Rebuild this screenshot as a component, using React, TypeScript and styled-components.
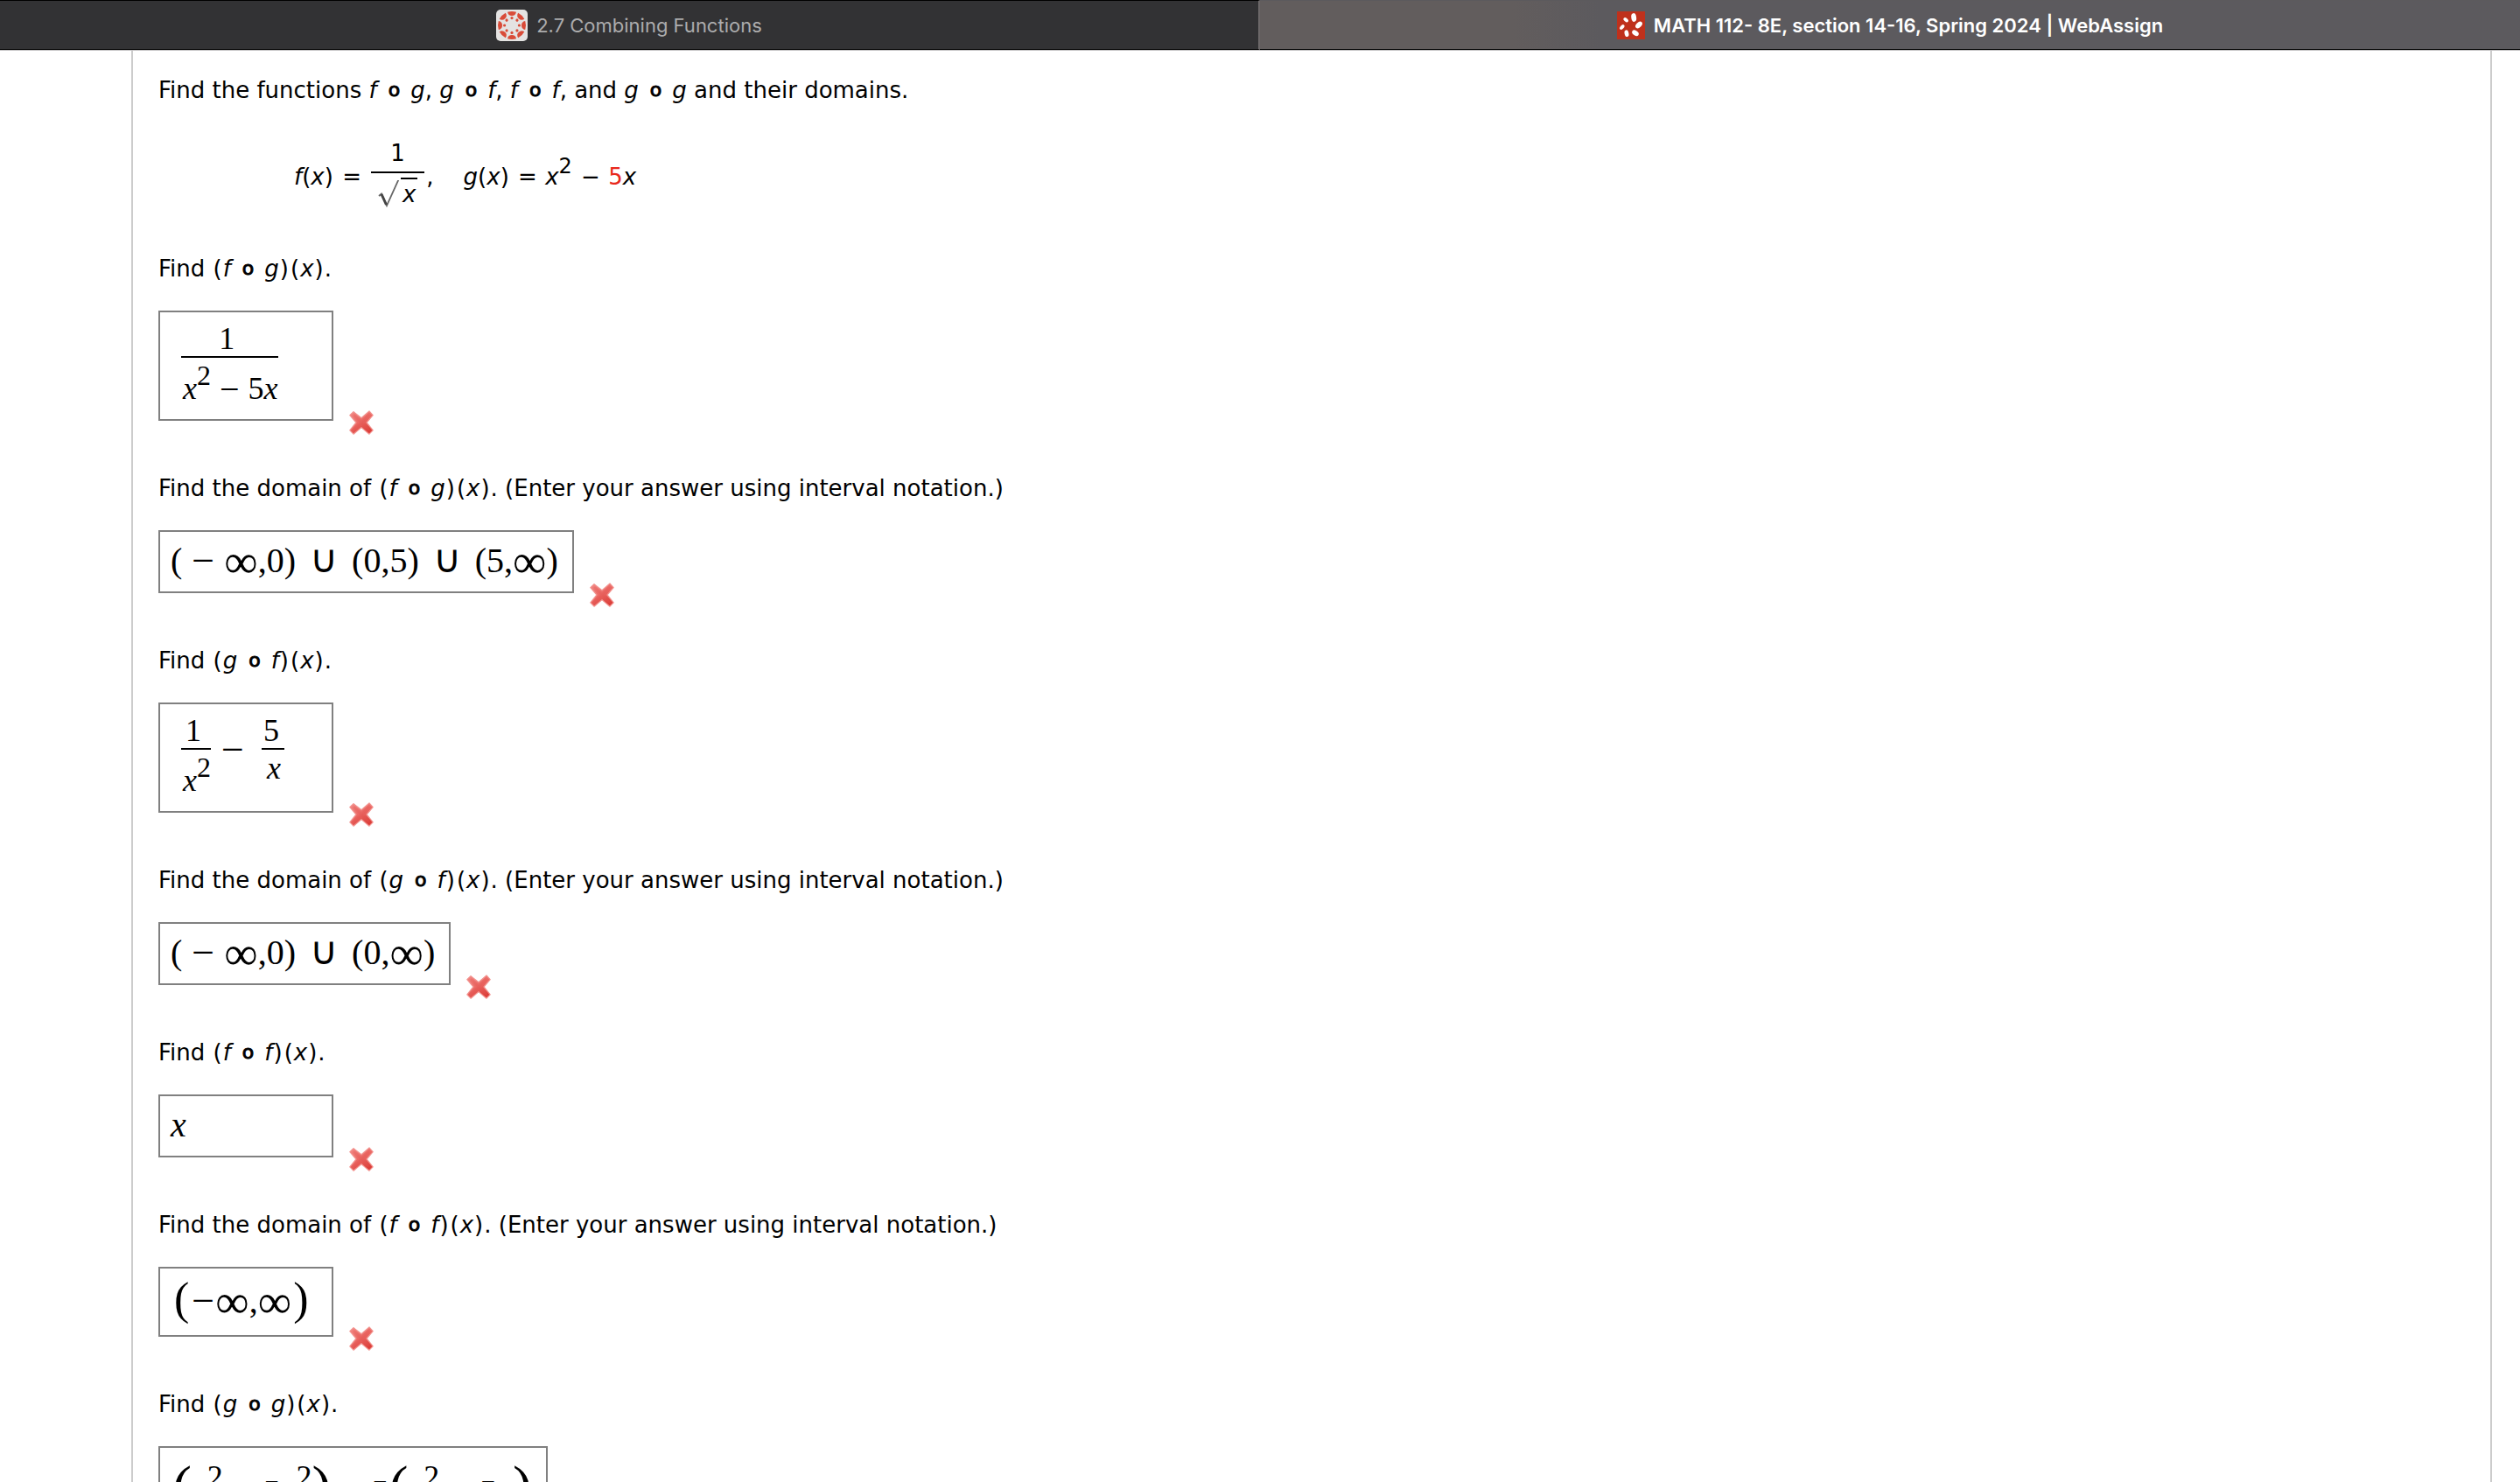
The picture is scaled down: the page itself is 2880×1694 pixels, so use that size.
import React from "react";
import styled, { createGlobalStyle } from "styled-components";

const GlobalStyle = createGlobalStyle`
  * { box-sizing: border-box; }
  body { margin: 0; background: #fff; }
`;

const sans = `"DejaVu Sans", Verdana, sans-serif`;
const serif = `"Liberation Serif", "Times New Roman", serif`;

const Shell = styled.div`
  height: 100vh;
  overflow: hidden;
  display: flex;
  flex-direction: column;
  color: #000;
  font: 26px/32px ${sans};
`;

const TabBar = styled.nav`
  display: grid;
  grid-template-columns: 1fr 1fr;
  flex: none;
  height: 58px;
  border-bottom: 1px solid #c4c2c4;
`;

const Tab = styled.button<{ $active?: boolean }>`
  display: flex;
  align-items: center;
  justify-content: center;
  gap: 10px;
  border: 0;
  border-top: 1px solid ${(p) => (p.$active ? "#5c5a5d" : "#000")};
  border-bottom: 1px solid #000;
  border-right: ${(p) => (p.$active ? "0" : "2px solid #6b6768")};
  padding: 0;
  background: ${(p) =>
    p.$active ? "linear-gradient(90deg, #625d5d 0%, #625d5d 20%, #5c5a5e 27%, #5c5a5e 100%)" : "#323234"};
  color: ${(p) => (p.$active ? "#fff" : "#acacad")};
  font: ${(p) => (p.$active ? 600 : 400)} 22px/28px Inter, sans-serif;
`;

const Question = styled.main`
  flex: 1;
  margin: 0 32px 0 150px;
  padding: 29px;
  border: solid #ccc;
  border-width: 0 2px;
`;

const Prompt = styled.p`
  margin: 0;
`;

const Circle = styled.span`
  margin: 0 12px 0 13px;
  font-size: 22px;
  line-height: 22px;
  vertical-align: 2px;
  -webkit-text-stroke: 1px #000;
`;

const Paren = styled.span`
  margin: 0 1px;
`;

const Equation = styled.div`
  display: flex;
  align-items: center;
  margin: 40px 0 46px;
  padding-left: 155px;
`;

const Ratio = styled.span`
  display: flex;
  flex-direction: column;
  align-items: center;
  margin: 0 2px 0 10px;
  padding-bottom: 7px;
`;

const RatioTop = styled.span`
  align-self: stretch;
  text-align: center;
  padding-bottom: 5px;
  border-bottom: 2px solid #000;
`;

const RatioBottom = styled.span`
  display: flex;
  padding: 8px 8px 0;
`;

const Radicand = styled.span`
  margin-top: -3px;
  padding: 1px 2px 0;
  border-top: 2px solid #000;
`;

const Power = styled.sup`
  font-size: 24px;
  line-height: 0;
  vertical-align: 13px;
`;

const Red = styled.span`
  color: #e8281c;
`;

const Second = styled.span`
  margin-left: 34px;
`;

const Relation = styled.span`
  margin: 0 1px 0 2px;
`;

const AnswerRow = styled.div`
  display: flex;
  align-items: flex-end;
  gap: 18px;
  margin: 32px 0 45px;
`;

const AnswerBox = styled.output`
  display: flex;
  align-items: flex-start;
  min-width: 200px;
  margin-bottom: 16px;
  padding: 9px 16px 11px 12px;
  border: 2px solid #808080;
  font: 40px/48px ${serif};
  white-space: pre;
`;

const TallBox = styled(AnswerBox)`
  padding: 13px 16px 15px 14px;
`;

const PowerBox = styled(AnswerBox)`
  padding: 27px 16px 24px 14px;
`;

const FractionBox = styled(AnswerBox)`
  padding: 10px 24px 15px;
`;

const Fraction = styled.span`
  display: flex;
  flex-direction: column;
  align-items: center;
  font-size: 36px;
  line-height: 40px;
`;

const Numerator = styled.span<{ $wide?: boolean }>`
  align-self: stretch;
  padding: ${(p) => (p.$wide ? "0 6px 0 2px" : "0 6px 0 0")};
  text-align: center;
  border-bottom: 2px solid #000;
`;

const Denominator = styled.span<{ $low?: boolean }>`
  margin-left: 2px;
  padding-top: ${(p) => (p.$low ? 15 : 1)}px;
`;

const Exponent = styled.sup`
  font-size: 32px;
  line-height: 0;
  vertical-align: 16px;
`;

const BigExponent = styled(Exponent)`
  font-size: 36px;
  vertical-align: 19px;
`;

const Op = styled.span<{ $gap?: number }>`
  margin: 0 ${(p) => p.$gap ?? 0}px;
  font-size: 46px;
  line-height: 0;
  vertical-align: -2px;
`;

const SmallOp = styled(Op)`
  font-size: 40px;
`;

const FractionMinus = styled(Op)`
  margin: 0 20px 0 12px;
  line-height: 48px;
  padding-top: 18px;
`;

const Infinity = styled.span`
  font-size: 54px;
  line-height: 0;
  vertical-align: -6px;
`;

const Cup = styled.span`
  margin: 0 16px;
  font-family: "DejaVu Sans Light", "DejaVu Sans", sans-serif;
  font-size: 44px;
  font-weight: 200;
  line-height: 0;
`;

const Fence = styled.span<{ $size: number }>`
  margin: 0 2px;
  font-size: ${(p) => p.$size}px;
  line-height: 0;
  vertical-align: -2px;
`;

const TallFence = styled(Fence)`
  margin: 0;
`;

const Inf = () => <Infinity>∞</Infinity>;
const Union = () => <Cup>∪</Cup>;

const WrongIcon = () => (
  <svg width="28" height="28" viewBox="0 0 28 28" role="img" aria-label="Incorrect">
    <defs>
      <linearGradient id="wrong" x1="0" y1="0" x2="0.6" y2="1">
        <stop offset="0" stopColor="#f28c88" />
        <stop offset="0.55" stopColor="#ea6763" />
        <stop offset="1" stopColor="#dc3f3a" />
      </linearGradient>
    </defs>
    <path
      d="M5 1.600 14 8.800 23 1 27.200 5.600 20 14 27.200 22.800 23 27.200 14 19.600 5 27.200 .8 22.800 8 14 .8 5.600Z"
      fill="url(#wrong)"
      stroke="#f2938f"
      strokeWidth="1.200"
      strokeLinejoin="round"
    />
    <path d="M6 6 22 22M22 6 6 22" stroke="#e4524e" strokeWidth="3" strokeLinecap="round" opacity="0.25" />
  </svg>
);

const spokes = [0, 45, 90, 135, 180, 225, 270, 315];

const CanvasLogo = () => (
  <svg width="36" height="36" viewBox="0 0 36 36" aria-hidden="true">
    <rect width="36" height="36" rx="5" fill="#e4e3e2" />
    {spokes.map((a) => (
      <g key={a} transform={`rotate(${a} 18 18)`} fill="#d94b38">
        <path d="M13 2.800Q18 1.200 23 2.800Q22.200 7 18 7Q13.800 7 13 2.800Z" />
        <circle cx="18" cy="9.600" r="1.600" />
      </g>
    ))}
  </svg>
);

const WebAssignLogo = () => (
  <svg width="32" height="32" viewBox="0 0 32 32" aria-hidden="true">
    <rect width="32" height="32" fill="#bf311c" />
    <g fill="#fff">
      <ellipse cx="19.200" cy="7" rx="2.900" ry="4.900" transform="rotate(-8 19.200 7)" />
      <ellipse cx="25" cy="15.500" rx="2.900" ry="4.600" transform="rotate(45 25 15.500)" />
      <ellipse cx="21" cy="24.800" rx="2.700" ry="4.200" transform="rotate(-55 21 24.800)" />
      <ellipse cx="11" cy="25.200" rx="2.400" ry="3.900" transform="rotate(-12 11 25.200)" />
      <ellipse cx="5.800" cy="18" rx="2" ry="3.400" transform="rotate(40 5.800 18)" />
      <ellipse cx="10.200" cy="9.800" rx="2" ry="3.200" transform="rotate(-50 10.200 9.800)" />
    </g>
  </svg>
);

const Radical = () => (
  <svg width="26" height="32" viewBox="0 0 26 32" aria-hidden="true">
    <path d="M1 18 4 15.500 10 29 25 -4" fill="none" stroke="#666" strokeWidth="1.800" />
    <path d="M4 16 9.500 28" fill="none" stroke="#444" strokeWidth="3" />
  </svg>
);

const Compose = ({ a, b }: { a: string; b: string }) => (
  <>
    <i>{a}</i>
    <Circle>o</Circle>
    <i>{b}</i>
  </>
);

const Composite = ({ a, b }: { a: string; b: string }) => (
  <>
    <Paren>(</Paren>
    <Compose a={a} b={b} />
    <Paren>)</Paren>
    <Paren>(</Paren>
    <i>x</i>
    <Paren>)</Paren>.
  </>
);

type PartProps = { a: string; b: string; domain?: boolean; children: React.ReactNode };

const Part = ({ a, b, domain, children }: PartProps) => (
  <section>
    <Prompt>
      {domain ? "Find the domain of " : "Find "}
      <Composite a={a} b={b} />
      {domain && " (Enter your answer using interval notation.)"}
    </Prompt>
    <AnswerRow>
      {children}
      <WrongIcon />
    </AnswerRow>
  </section>
);

export default function App() {
  return (
    <Shell>
      <GlobalStyle />
      <TabBar>
        <Tab>
          <CanvasLogo />
          2.7 Combining Functions
        </Tab>
        <Tab $active>
          <WebAssignLogo />
          MATH 112- 8E, section 14-16, Spring 2024 | WebAssign
        </Tab>
      </TabBar>
      <Question>
        <Prompt>
          Find the functions <Compose a="f" b="g" />, <Compose a="g" b="f" />, <Compose a="f" b="f" />, and{" "}
          <Compose a="g" b="g" /> and their domains.
        </Prompt>
        <Equation>
          <span>
            <i>f</i>(<i>x</i>) <Relation>=</Relation>
          </span>
          <Ratio>
            <RatioTop>1</RatioTop>
            <RatioBottom>
              <Radical />
              <Radicand>
                <i>x</i>
              </Radicand>
            </RatioBottom>
          </Ratio>
          <span>,</span>
          <Second>
            <i>g</i>(<i>x</i>) <Relation>=</Relation> <i>x</i>
            <Power>2</Power> <Relation>−</Relation> <Red>5</Red>
            <i>x</i>
          </Second>
        </Equation>

        <Part a="f" b="g">
          <FractionBox>
            <Fraction>
              <Numerator>1</Numerator>
              <Denominator $low>
                <i>x</i>
                <Exponent>2</Exponent>
                <SmallOp $gap={10}>−</SmallOp>5<i>x</i>
              </Denominator>
            </Fraction>
          </FractionBox>
        </Part>

        <Part a="f" b="g" domain>
          <AnswerBox>
            <span>
              (<Op $gap={11}>−</Op>
              <Inf />
              ,0)
              <Union />
              (0,5)
              <Union />
              (5,
              <Inf />)
            </span>
          </AnswerBox>
        </Part>

        <Part a="g" b="f">
          <FractionBox>
            <Fraction>
              <Numerator>1</Numerator>
              <Denominator $low>
                <i>x</i>
                <Exponent>2</Exponent>
              </Denominator>
            </Fraction>
            <FractionMinus>−</FractionMinus>
            <Fraction>
              <Numerator $wide>5</Numerator>
              <Denominator>
                <i>x</i>
              </Denominator>
            </Fraction>
          </FractionBox>
        </Part>

        <Part a="g" b="f" domain>
          <AnswerBox>
            <span>
              (<Op $gap={11}>−</Op>
              <Inf />
              ,0)
              <Union />
              (0,
              <Inf />)
            </span>
          </AnswerBox>
        </Part>

        <Part a="f" b="f">
          <AnswerBox>
            <i>x</i>
          </AnswerBox>
        </Part>

        <Part a="f" b="f" domain>
          <TallBox>
            <span>
              <Fence $size={52}>(</Fence>
              <Op $gap={1}>−</Op>
              <Inf />,<Inf />
              <Fence $size={52}>)</Fence>
            </span>
          </TallBox>
        </Part>

        <Part a="g" b="g">
          <PowerBox>
            <span>
              <TallFence $size={66}>(</TallFence>
              <i>x</i>
              <BigExponent>2</BigExponent>
              <Op $gap={10}>−</Op>5<i>x</i>
              <BigExponent>2</BigExponent>
              <TallFence $size={66}>)</TallFence>
              <Op $gap={10}>−</Op>5<TallFence $size={66}>(</TallFence>
              <i>x</i>
              <BigExponent>2</BigExponent>
              <Op $gap={10}>−</Op>5<i>x</i>
              <TallFence $size={66}>)</TallFence>
            </span>
          </PowerBox>
        </Part>
      </Question>
    </Shell>
  );
}
